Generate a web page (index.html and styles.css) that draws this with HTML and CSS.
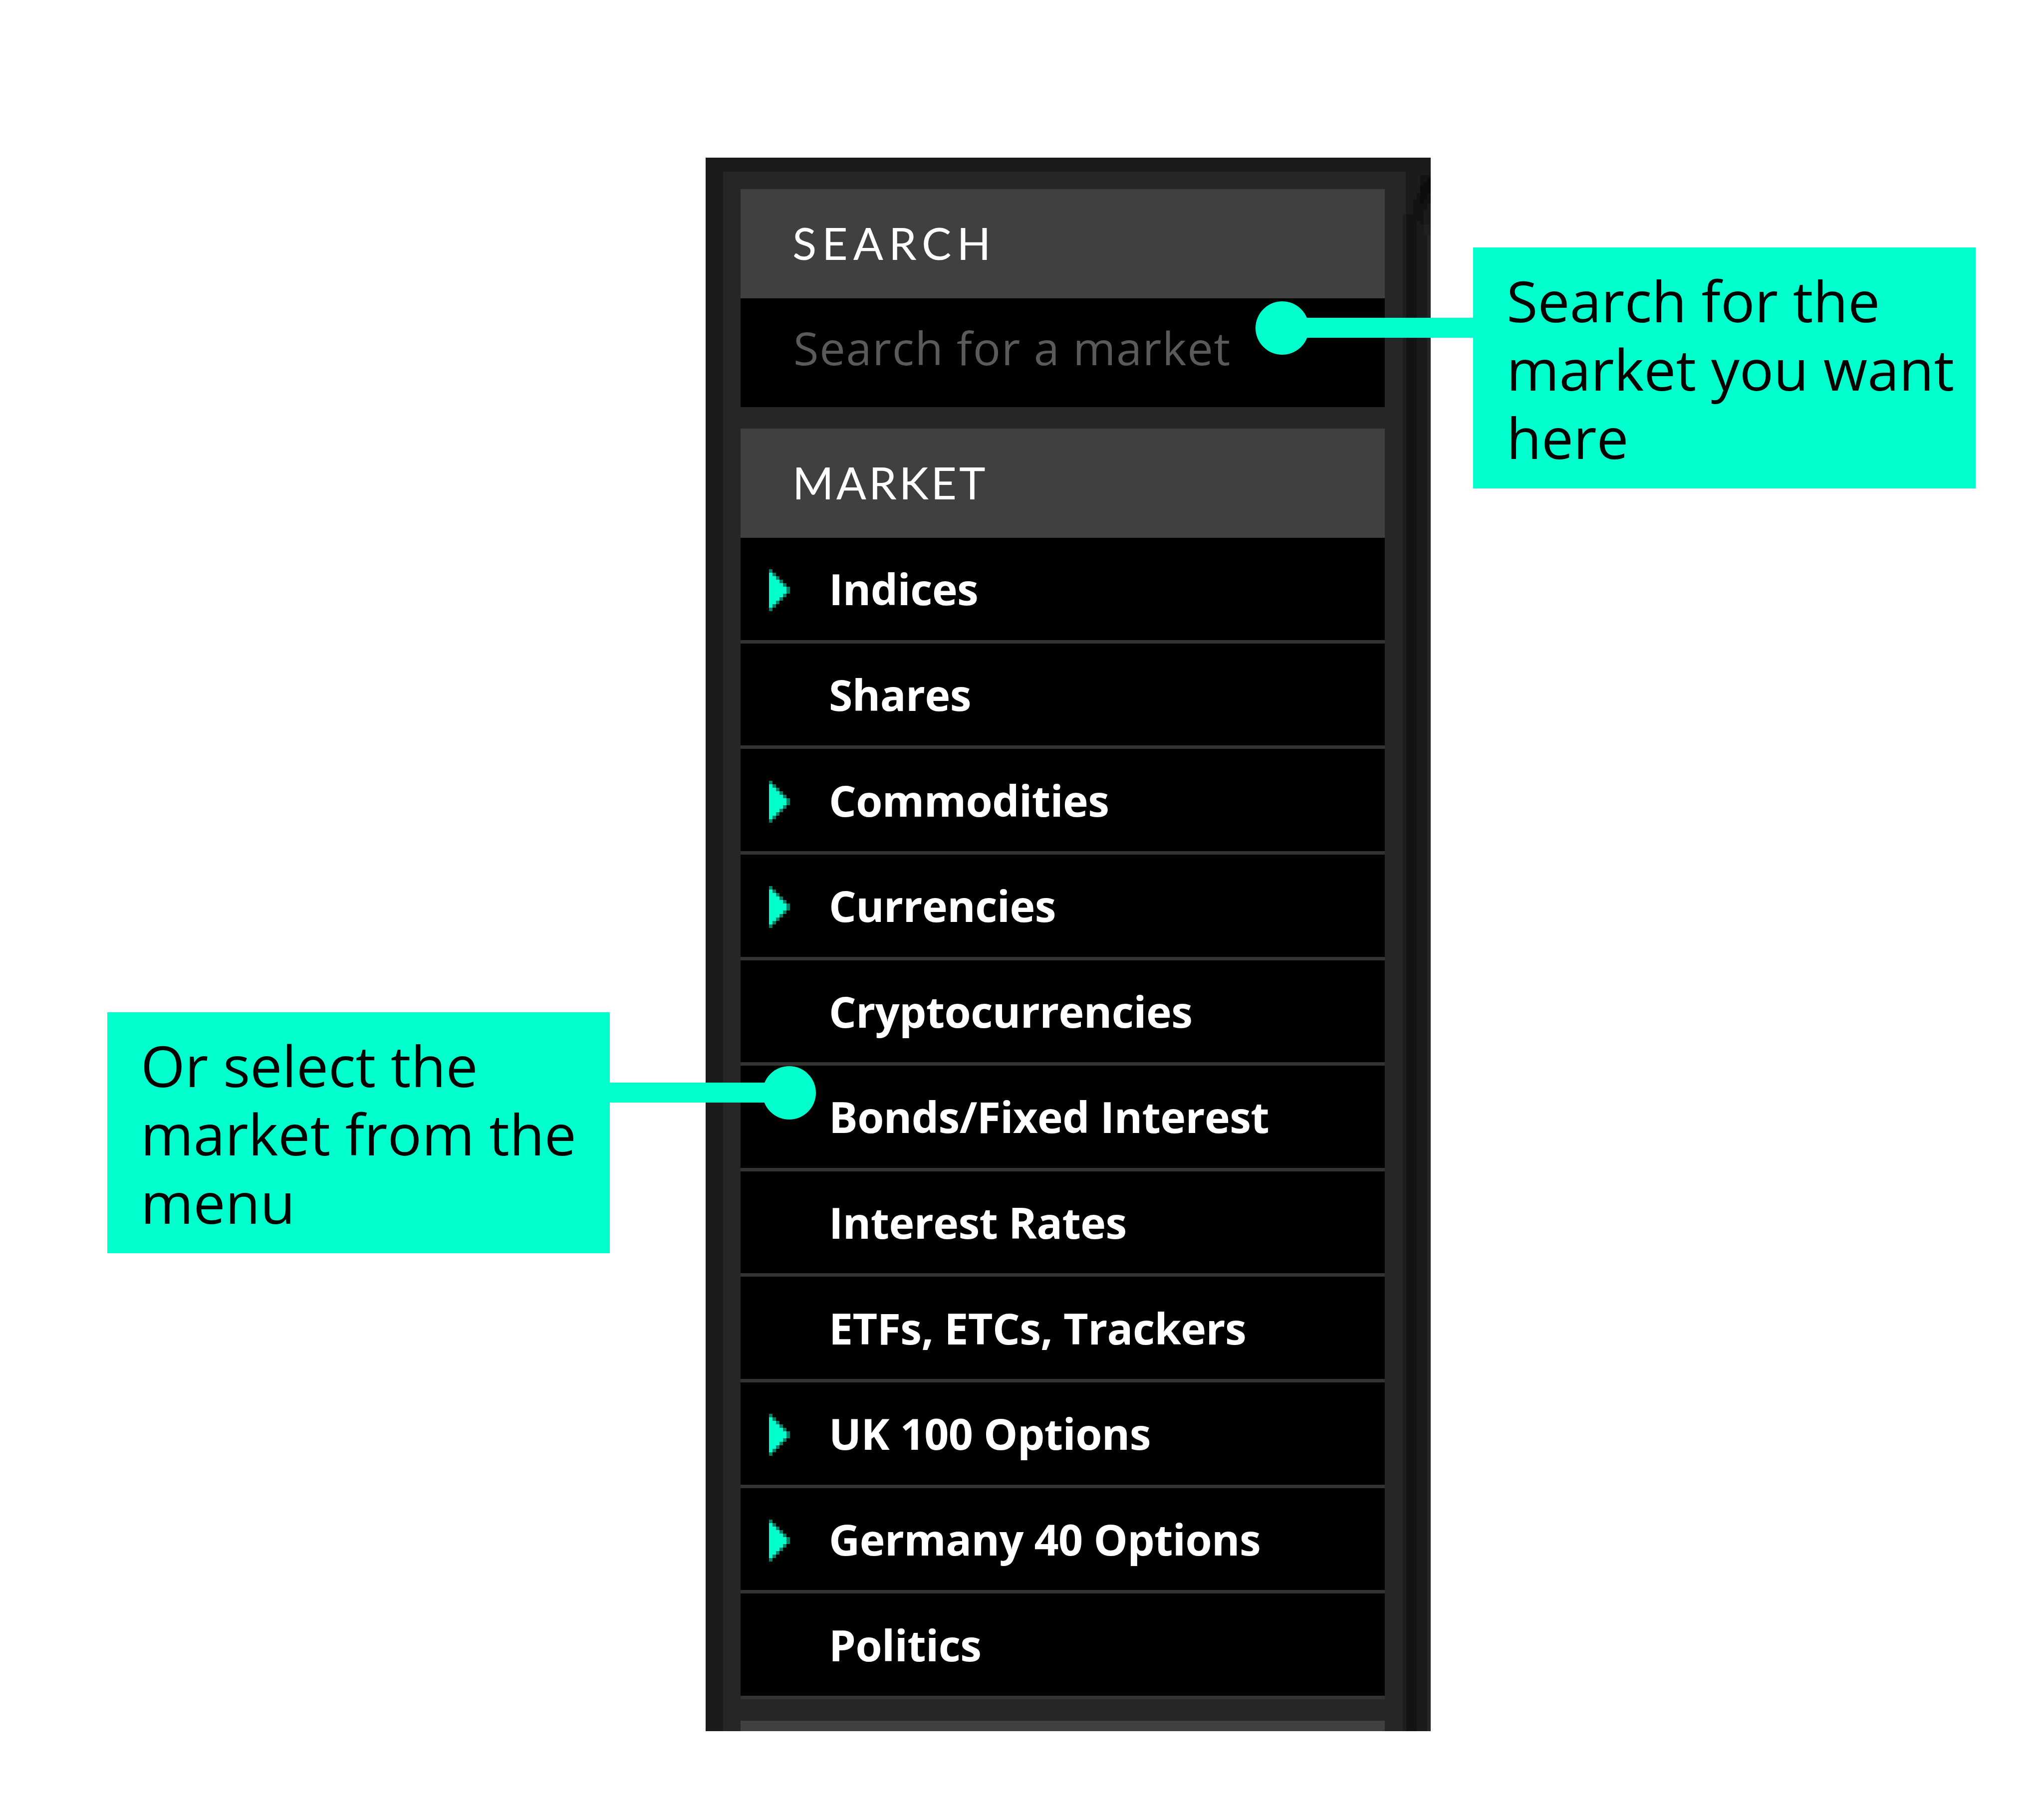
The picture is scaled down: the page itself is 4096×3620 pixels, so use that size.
FILE: index.html
```html
<!DOCTYPE html>
<html lang="en">
<head>
  <meta charset="UTF-8">
  <meta name="viewport" content="width=device-width, initial-scale=1.0">
  <title>Find a market</title>
  <link rel="stylesheet" href="styles.css">
</head>
<body>

<svg class="defs" width="0" height="0">
  <symbol id="arrow" viewBox="0 0 6 12">
    <path fill="#008066" d="M0 0h1v1h1v1h1v1h1v1h1v1h1v2h-1v1h-1v1h-1v1h-1v1h-1v1h-1z"/>
    <path fill="#00ffcc" d="M0 1h1v1h1v1h1v1h1v1h1v2h-1v1h-1v1h-1v1h-1v1h-1z"/>
  </symbol>
</svg>

<div class="panel">
  <div class="sidebar">
    <h2 class="heading heading-search">SEARCH</h2>
    <div class="search">Search for a market</div>

    <h2 class="heading">MARKET</h2>
    <ul class="menu">
      <li><svg class="arrow"><use href="#arrow"/></svg><span>Indices</span></li>
      <li><span>Shares</span></li>
      <li><svg class="arrow"><use href="#arrow"/></svg><span>Commodities</span></li>
      <li><svg class="arrow"><use href="#arrow"/></svg><span>Currencies</span></li>
      <li><span>Cryptocurrencies</span></li>
      <li><span>Bonds/Fixed Interest</span></li>
      <li><span>Interest Rates</span></li>
      <li><span>ETFs, ETCs, Trackers</span></li>
      <li><svg class="arrow"><use href="#arrow"/></svg><span>UK 100 Options</span></li>
      <li><svg class="arrow"><use href="#arrow"/></svg><span>Germany 40 Options</span></li>
      <li><span>Politics</span></li>
    </ul>
    <div class="heading"></div>
  </div>

  <!-- shadow down the right edge -->
  <svg class="edge" viewBox="0 0 99 5531" preserveAspectRatio="none">
    <rect x="0" y="198" width="12" height="5333" fill="#1e1e1e"/>
    <rect x="12" y="198" width="37" height="5333" fill="#131313"/>
    <rect x="49" y="198" width="37" height="5333" fill="#1b1b1b"/>
    <rect x="86" y="272" width="13" height="5259" fill="#262626"/>
    <rect x="74" y="235" width="25" height="37" fill="#202020"/>
    <path fill="#131313" d="M62 62H99V161H86V186H74V235H62V223H49V198H37V148H49V124H62z"/>
    <path fill="#0c0c0c" d="M86 74H99V124H86V148H74V161H62V99H74V87H86z"/>
  </svg>
</div>

<div class="callout callout-search">
  Search for the<br>market you want<br>here
</div>
<div class="callout callout-menu">
  Or select the<br>market from the<br>menu
</div>

</body>
</html>
```

FILE: styles.css
```css
* {
  box-sizing: border-box;
}
body {
  position: relative;
  width: 4096px;
  height: 3620px;
  margin: 0;
  padding-top: 316px;
  overflow: hidden;
  background-color: #fff;
  font-family: "Open Sans", "Noto Sans", sans-serif;
}
.defs {
  position: absolute;
}
.panel {
  position: relative;
  width: 1453px;
  height: 3154px;
  margin-left: 1414px;
  padding: 28px 50px 0 35px;
  overflow: hidden;
  background-color: #1b1b1b;
}
.sidebar {
  height: 3126px;
  padding: 35px 42px 0 35px;
  background-color: #262626;
}
.heading {
  height: 219px;
  margin: 0;
  padding-left: 104px;
  background-color: #404040;
  color: #fff;
  font-family: Lato, sans-serif;
  font-size: 89px;
  font-weight: 400;
  line-height: 215px;
  letter-spacing: 5px;
}
.heading-search {
  letter-spacing: 11px;
}
.search {
  height: 218px;
  margin-bottom: 43px;
  padding-left: 106px;
  background-color: #000;
  color: #5a5a5a;
  font-size: 92px;
  line-height: 197px;
  letter-spacing: 1.7px;
}
.menu {
  margin: 0 0 43px;
  padding: 0;
  list-style: none;
}
.menu li {
  display: flex;
  align-items: center;
  height: 211.64px;
  padding-left: 56px;
  border-bottom: 7px solid #333;
  background-color: #000;
  color: #fff;
  font-size: 86px;
  font-weight: 700;
  line-height: 204px;
  letter-spacing: -0.6px;
}
.menu span {
  margin-left: auto;
  width: 1114px;
  white-space: nowrap;
}
.arrow {
  width: 43px;
  height: 84px;
  margin-top: 6px;
  shape-rendering: crispEdges;
}
.edge {
  position: absolute;
  top: 0;
  right: 0;
  width: 56px;
  height: 3154px;
  shape-rendering: crispEdges;
}
.callout {
  position: absolute;
  width: 1007px;
  height: 483px;
  padding: 38px 0 0 67px;
  background-color: #00ffcc;
  color: #000;
  font-size: 114px;
  line-height: 136.9px;
  white-space: nowrap;
}
/* connector line and dot */
.callout::before,
.callout::after {
  content: "";
  position: absolute;
  background-color: #00ffcc;
}
.callout::before {
  top: 141px;
  width: 382px;
  height: 40px;
}
.callout::after {
  top: 108px;
  width: 107px;
  height: 107px;
  border-radius: 50%;
}
.callout-search {
  top: 496px;
  left: 2952px;
}
.callout-search::before {
  right: 100%;
}
.callout-search::after {
  left: -436px;
}
.callout-menu {
  top: 2029px;
  left: 215px;
}
.callout-menu::before {
  left: 100%;
  width: 360px;
}
.callout-menu::after {
  left: 1313px;
}
```
